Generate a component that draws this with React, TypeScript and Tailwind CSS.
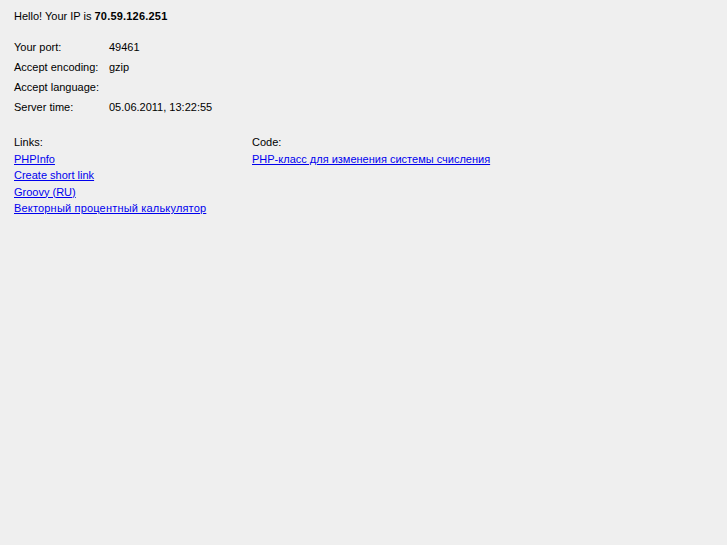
export default function App() {
    const rows = [
        { label: "Your port:", value: "49461" },
        { label: "Accept encoding:", value: "gzip" },
        { label: "Accept language:", value: "" },
        { label: "Server time:", value: "05.06.2011, 13:22:55" },
    ];

    const links = ["PHPInfo", "Create short link", "Groovy (RU)"];

    return (
        <div className="min-h-[545px] w-full bg-[#efefef] px-[14px] pt-[10px] text-[11px] leading-[13px] text-black font-['Liberation_Sans',Arial,sans-serif]">
            <p>
                Hello! Your IP is <b className="tracking-[0.2px]">70.59.126.251</b>
            </p>
            <div className="mt-[18px] flex flex-col gap-[7px]">
                {rows.map((row) => (
                    <div key={row.label} className="flex">
                        <span className="w-[95px]">{row.label}</span>
                        <span>{row.value}</span>
                    </div>
                ))}
            </div>
            <div className="mt-[22px] flex">
                <div className="w-[238px] flex flex-col gap-[3.5px]">
                    <span>Links:</span>
                    {links.map((l) => (
                        <a key={l} href="#" className="text-[#0000ee] underline">{l}</a>
                    ))}
                    <a href="#" className="text-[#0000ee] underline tracking-[0.18px]">Векторный процентный калькулятор</a>
                </div>
                <div className="flex flex-col gap-[3.5px]">
                    <span>Code:</span>
                    <a href="#" className="text-[#0000ee] underline">PHP-класс для изменения системы счисления</a>
                </div>
            </div>
        </div>
    );
}
